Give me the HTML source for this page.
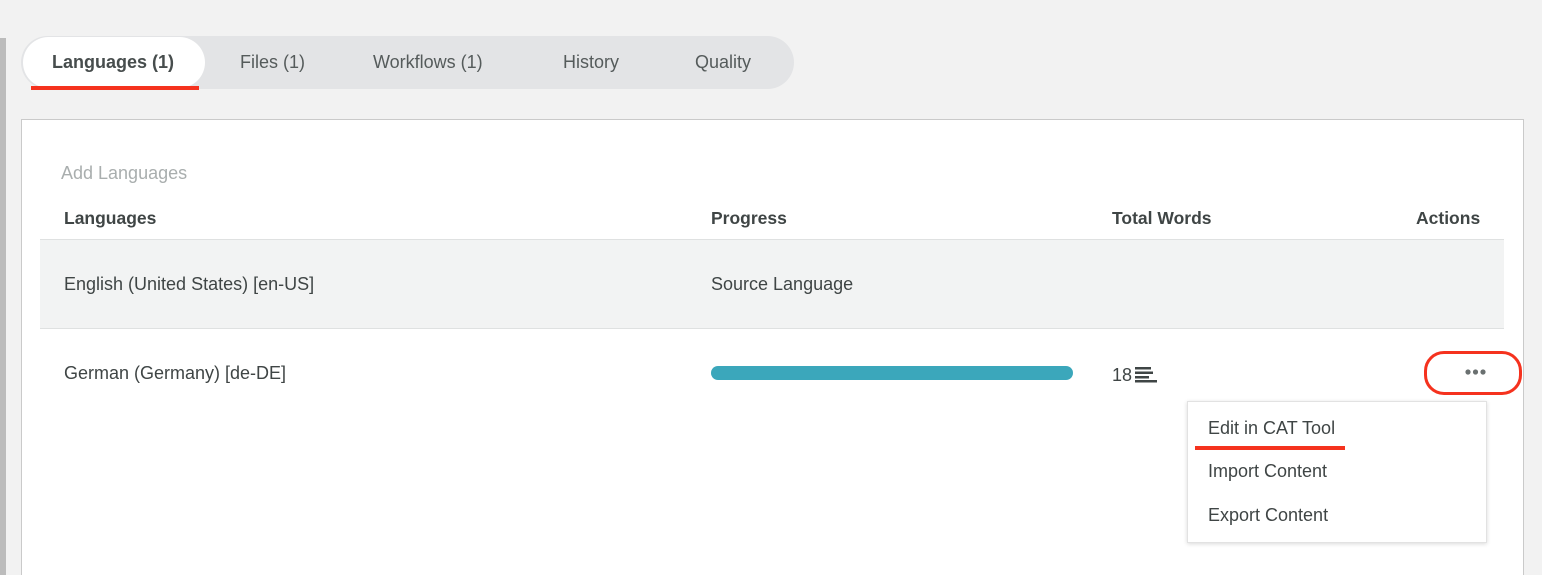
<!DOCTYPE html>
<html><head><style>
html,body{margin:0;width:1542px;height:575px;overflow:hidden}
body{background:#f2f2f2;font-family:"Liberation Sans",sans-serif;color:#3f4545;position:relative}
.abs{position:absolute}
.lbar{left:0;top:38px;width:6px;height:537px;background:#bcbcbc}
.tabs{left:21px;top:36px;width:773px;height:53px;background:#e3e4e6;border-radius:27px}
.tab{top:36px;height:53px;line-height:53px;font-size:18px;color:#555b5b}
.act{left:23px;top:37px;width:182px;height:51px;background:#fff;border-radius:26px}
.panel{left:21px;top:119px;width:1501px;height:470px;background:#fff;border:1px solid #cacaca}
.t{font-size:18px;white-space:nowrap}
.b{font-weight:bold;font-size:17.5px}
.red{background:#f5321e}
</style></head><body>
<div class="abs lbar"></div>
<div class="abs tabs"></div>
<div class="abs act"></div>
<div class="abs tab b" style="left:52px;font-size:18px;color:#474d4d">Languages (1)</div>
<div class="abs tab" style="left:240px">Files (1)</div>
<div class="abs tab" style="left:373px">Workflows (1)</div>
<div class="abs tab" style="left:563px">History</div>
<div class="abs tab" style="left:695px">Quality</div>
<div class="abs red" style="left:31px;top:86px;width:168px;height:4px"></div>

<div class="abs panel"></div>
<div class="abs t" style="left:61px;top:163px;color:#a9aeae">Add Languages</div>
<div class="abs t b" style="left:64px;top:208px">Languages</div>
<div class="abs t b" style="left:711px;top:208px">Progress</div>
<div class="abs t b" style="left:1112px;top:208px">Total Words</div>
<div class="abs t b" style="left:1416px;top:208px">Actions</div>
<div class="abs" style="left:40px;top:239px;width:1464px;height:88px;background:#f2f3f3;border-top:1px solid #dfe1e1;border-bottom:1px solid #dfe1e1"></div>
<div class="abs t" style="left:64px;top:274px">English (United States) [en-US]</div>
<div class="abs t" style="left:711px;top:274px">Source Language</div>
<div class="abs t" style="left:64px;top:363px">German (Germany) [de-DE]</div>
<div class="abs" style="left:711px;top:366px;width:362px;height:14px;border-radius:7px;background:#3ba7bb"></div>
<div class="abs t" style="left:1112px;top:365px">18</div>
<svg class="abs" style="left:1135px;top:365px" width="24" height="18"><g fill="#3f4545"><rect x="0" y="2" width="16" height="2.5"/><rect x="0" y="6.5" width="18" height="2.5"/><rect x="0" y="11" width="14" height="2.5"/><rect x="0" y="15" width="22" height="2.5"/></g></svg>
<div class="abs" style="left:1424px;top:351px;width:92px;height:38px;border:3px solid #f5321e;border-radius:20px"></div>
<svg class="abs" style="left:1464px;top:368px" width="24" height="8"><g fill="#6a7070"><circle cx="4" cy="4" r="2.6"/><circle cx="11.5" cy="4" r="2.6"/><circle cx="19" cy="4" r="2.6"/></g></svg>
<div class="abs" style="left:1187px;top:401px;width:298px;height:140px;background:#fff;border:1px solid #e2e2e2;box-shadow:0 1px 4px rgba(0,0,0,.15)"></div>
<div class="abs t" style="left:1208px;top:418px">Edit in CAT Tool</div>
<div class="abs red" style="left:1195px;top:446px;width:150px;height:4px"></div>
<div class="abs t" style="left:1208px;top:461px">Import Content</div>
<div class="abs t" style="left:1208px;top:505px">Export Content</div>
</body></html>
